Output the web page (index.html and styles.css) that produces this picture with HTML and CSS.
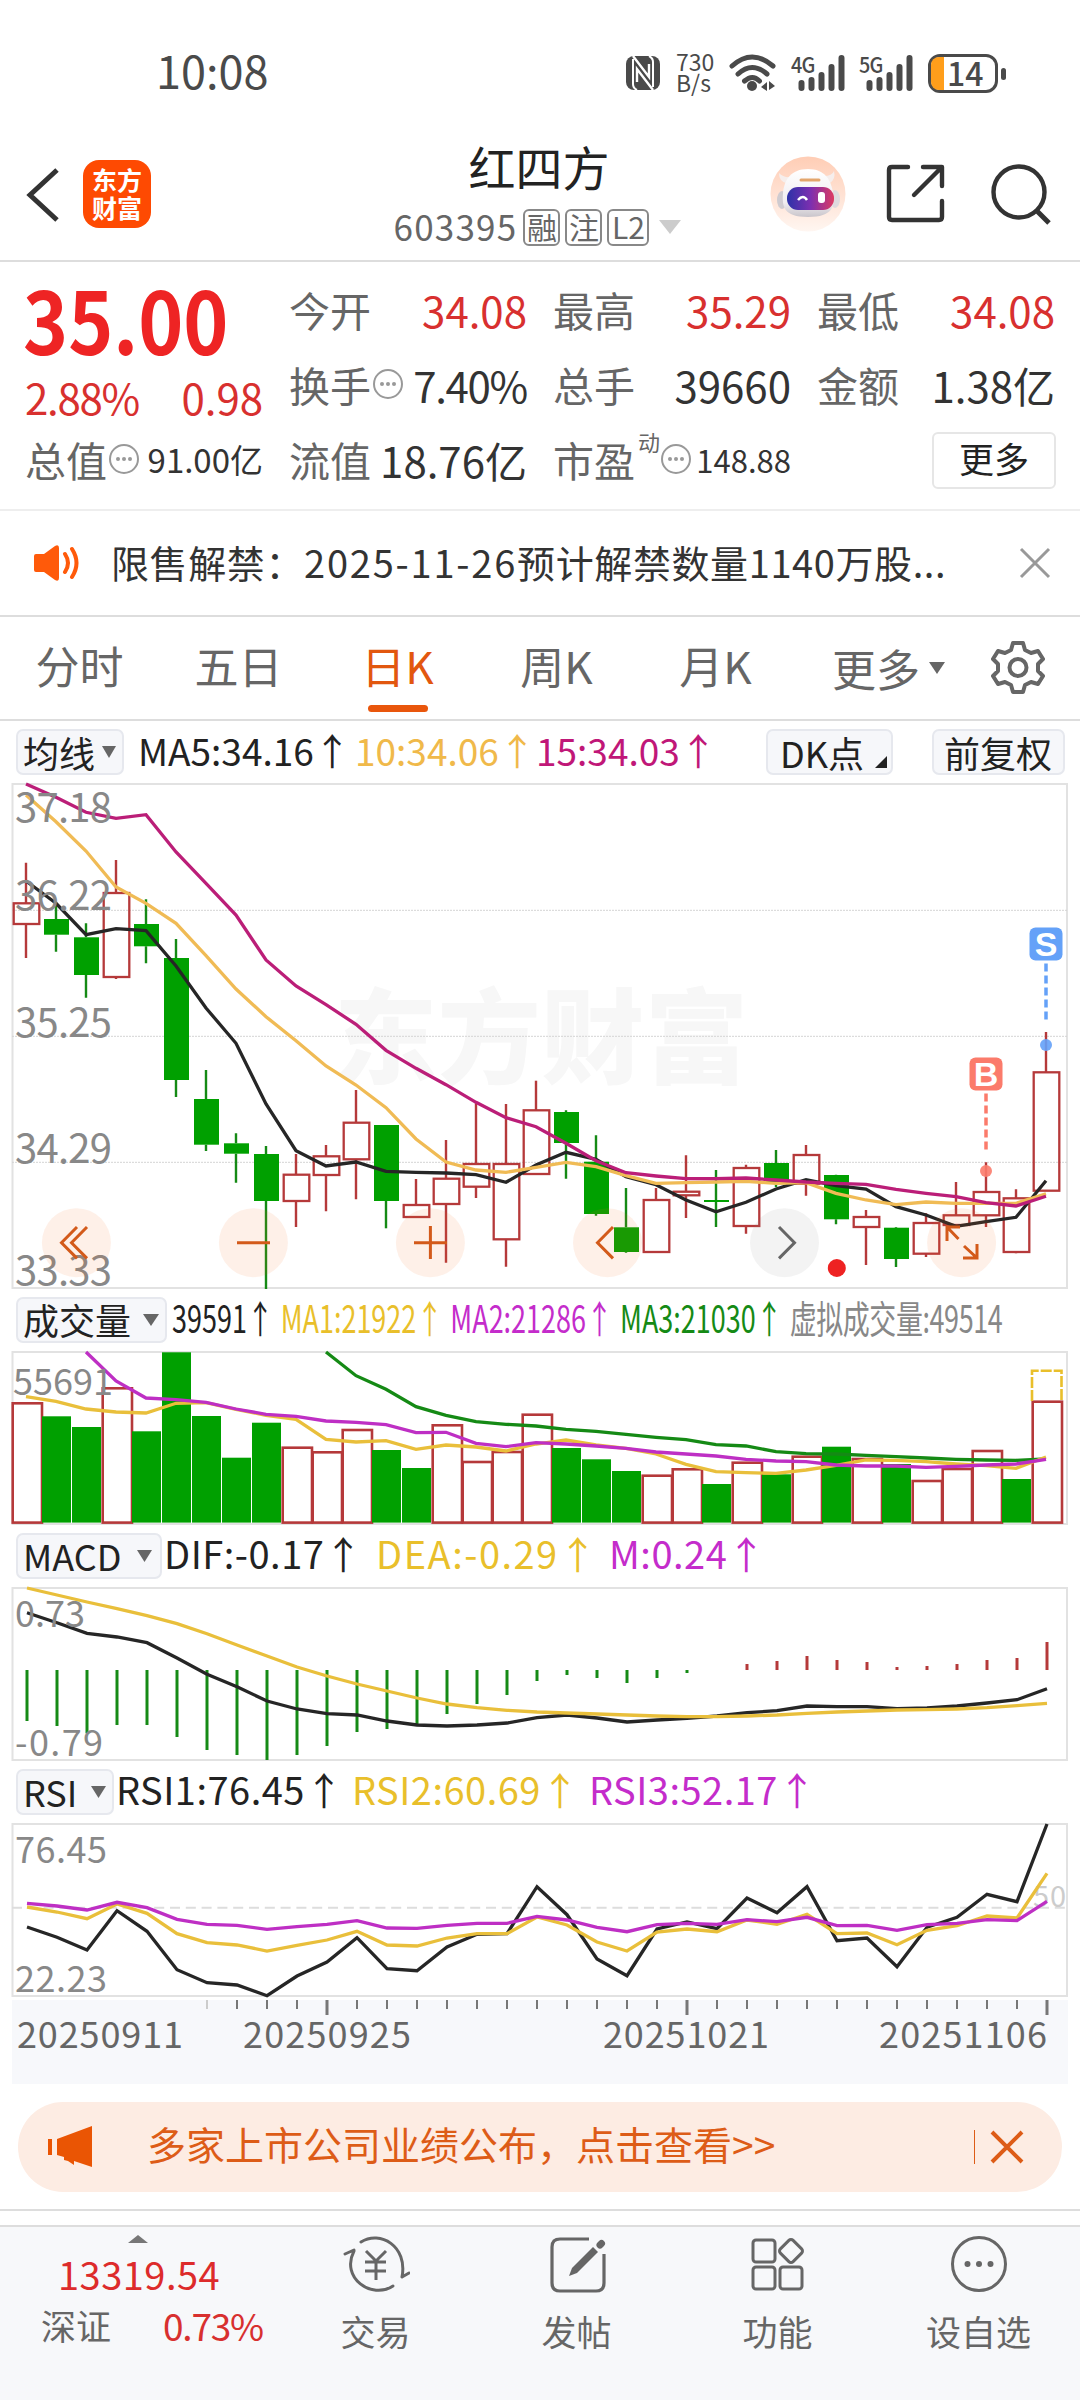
FILE: index.html
```html
<!DOCTYPE html>
<html lang="zh-CN">
<head>
	<meta charset="UTF-8">
	<title>红四方 603395</title>
	<link rel="stylesheet" href="styles.css">
</head>
<body>
	<!-- 状态栏 -->
	<div class="status">
		<span class="time">10:08</span>
		<svg class="nfc" width="34" height="34" viewBox="0 0 34 34"><rect width="34" height="34" rx="8" fill="#4a4a4a"/><path d="M7 0l16 21V8M27 34L11 13v13" fill="none" stroke="#fff" stroke-width="2.4"/><path d="M7 3v25q0 4 4 6M27 31V6q0-4-4-6" fill="none" stroke="#fff" stroke-width="2"/></svg>
		<span class="speed">730<br>B/s</span>
		<svg class="wifi" width="48" height="38" viewBox="0 0 48 38" fill="none" stroke="#4a4a4a" stroke-width="5" stroke-linecap="round"><path d="M3 12q20-18 41 0M9 20q14-13 29 0M15.500 27q8-7 15 0"/><circle cx="23" cy="32" r="5" fill="#4a4a4a" stroke="none"/><path d="M32 33l6-5v9zM46 32l-6-5v9z" fill="#4a4a4a" stroke="none"/></svg>
		<div class="signal">
			<span>4G</span>
			<svg width="54" height="38" viewBox="0 0 54 38" stroke="#4a4a4a" stroke-width="6" stroke-linecap="round"><path d="M10.500 29v5M20.500 26v8M30.500 21v13M40.500 13v21M50.500 4v30"/></svg>
		</div>
		<div class="signal">
			<span>5G</span>
			<svg width="54" height="38" viewBox="0 0 54 38" stroke="#4a4a4a" stroke-width="6" stroke-linecap="round"><path d="M10.500 29v5M20.500 26v8M30.500 21v13M40.500 13v21M50.500 4v30"/></svg>
		</div>
		<div class="battery"><i></i><span>14</span></div>
		<b class="nub"></b>
	</div>

	<!-- 标题栏 -->
	<div class="header">
		<svg class="back" width="34" height="56" viewBox="0 0 34 56"><path d="M31 3L4 28l27 25" fill="none" stroke="#333" stroke-width="5"/></svg>
		<div class="logo">东方<br>财富</div>
		<div class="title">
			<h1>红四方</h1>
			<p><span class="code">603395</span><em>融</em><em>注</em><em class="l2">L2</em><svg width="22" height="14"><path d="M0 0h22L11 14z" fill="#ccc"/></svg></p>
		</div>
		<svg class="robot" width="76" height="76" viewBox="0 0 76 76">
			<defs>
				<linearGradient id="peach" x1="0" y1="0" x2="0" y2="1"><stop offset="0" stop-color="#ffcdb5"/><stop offset="1" stop-color="#fff6f1"/></linearGradient>
				<linearGradient id="visor"><stop offset="0" stop-color="#2c32a8"/><stop offset=".5" stop-color="#7c2fb0"/><stop offset="1" stop-color="#dc3a62"/></linearGradient>
				<linearGradient id="helmet" x1="0" y1="0" x2="0" y2="1"><stop offset="0" stop-color="#fff"/><stop offset=".7" stop-color="#f0edf0"/><stop offset="1" stop-color="#c9c5cb"/></linearGradient>
			</defs>
			<circle cx="38" cy="38" r="37.500" fill="url(#peach)"/>
			<path d="M9 17q0 8 7 10l6-6q-9 1-13-4zM64 15q2 8-4 12l-6-7q8 0 10-5z" fill="#f6eeec"/>
			<ellipse cx="12" cy="44" rx="5" ry="9" fill="#cfcbd0"/><ellipse cx="65" cy="43" rx="5" ry="9" fill="#dedade"/>
			<path d="M38 13c17 0 23 11 25 24s0 24-25 24S12 50 13 37s8-24 25-24z" fill="url(#helmet)"/>
			<rect x="17" y="31" width="47" height="23" rx="11" fill="url(#visor)"/>
			<path d="M31 24h18" stroke="#e3a56c" stroke-width="3" stroke-linecap="round"/>
			<path d="M28 44q5-6 9 0" fill="none" stroke="#fff" stroke-width="2.500"/><rect x="48" y="36" width="7" height="11" rx="3" fill="#fff"/>
		</svg>
		<svg class="share" width="60" height="60" viewBox="0 0 60 60" fill="none" stroke="#333" stroke-width="4.400" stroke-linecap="round" stroke-linejoin="round"><path d="M23 4H7Q4 4 4 7v47q0 3 3 3h47q3 0 3-3V38M38 4h19v19M56 5L29 32"/></svg>
		<svg class="search" width="62" height="62" viewBox="0 0 62 62" fill="none" stroke="#333" stroke-width="4.400"><circle cx="29" cy="29" r="25.500"/><path d="M46 47l13 13" stroke-width="5"/></svg>
	</div>

	<!-- 行情 -->
	<div class="quote">
		<div class="col">
			<div class="price"><b>35.00</b></div>
			<div class="change"><span class="pct">2.88%</span><span>0.98</span></div>
			<div class="row"><label>总值</label><i class="dots"></i><span class="v s33">91.00亿</span></div>
		</div>
		<div class="col">
			<div class="row"><label>今开</label><span class="v up">34.08</span></div>
			<div class="row"><label>换手</label><i class="dots"></i><span class="v pct">7.40%</span></div>
			<div class="row"><label>流值</label><span class="v">18.76亿</span></div>
		</div>
		<div class="col">
			<div class="row"><label>最高</label><span class="v up">35.29</span></div>
			<div class="row"><label>总手</label><span class="v">39660</span></div>
			<div class="row"><label>市盈</label><sup>动</sup><i class="dots"></i><span class="v s31">148.88</span></div>
		</div>
		<div class="col">
			<div class="row"><label>最低</label><span class="v up">34.08</span></div>
			<div class="row"><label>金额</label><span class="v">1.38亿</span></div>
			<div class="row"><span class="more">更多</span></div>
		</div>
	</div>

	<!-- 公告 -->
	<div class="news">
		<svg width="46" height="38" viewBox="0 0 46 38"><path d="M2 10h8L21 2q4-2 4 2v30q0 4-4 2L10 28H2q-2 0-2-2V12q0-2 2-2z" fill="#ff5a0a"/><path d="M31 10q6 9 0 18M38 5q9 14 0 28" fill="none" stroke="#ff5a0a" stroke-width="4" stroke-linecap="round"/></svg>
		<span>限售解禁：<i>2025-11-26</i>预计解禁数量1140万股...</span>
		<svg class="close" width="32" height="32" viewBox="0 0 32 32"><path d="M2 2l28 28M30 2L2 30" stroke="#999" stroke-width="3"/></svg>
	</div>

	<!-- 周期切换 -->
	<div class="tabs">
		<span>分时</span><span>五日</span><span class="on">日K</span><span>周K</span><span>月K</span>
		<span class="drop">更多<svg width="16" height="12"><path d="M0 0h16L8 12z" fill="#666"/></svg></span>
		<svg class="gear" width="54" height="54" viewBox="0 0 54 54" fill="none" stroke="#666" stroke-width="4" stroke-linejoin="round"><path d="M22 3h10l2 7 6 3 7-2 5 8-5 5v7l5 5-5 8-7-2-6 3-2 7H22l-2-7-6-3-7 2-5-8 5-5v-7l-5-5 5-8 7 2 6-3z"/><circle cx="27" cy="27.500" r="8.500"/></svg>
	</div>

	<div class="legend main">
		<span class="pick">均线<svg width="14" height="12"><path d="M0 0h14L7 12z" fill="#666"/></svg></span>
		<span class="ma5">MA5:34.16<u>↑</u></span><span class="ma10">10:34.06<u>↑</u></span><span class="ma15">15:34.03<u>↑</u></span>
		<span class="pick dk">DK点<svg width="12" height="12"><path d="M12 0v12H0z" fill="#222"/></svg></span>
		<span class="pick fq">前复权</span>
	</div>
	<svg id="kline" class="chart" width="1080" height="504"></svg>

	<div class="legend vol">
		<span class="pick">成交量<svg width="16" height="12"><path d="M0 0h16L8 12z" fill="#666"/></svg></span>
		<div class="narrow"><span>39591<u>↑</u></span><span class="y">MA1:21922<u>↑</u></span><span class="m">MA2:21286<u>↑</u></span><span class="g">MA3:21030<u>↑</u></span><span class="v">虚拟成交量:49514</span></div>
	</div>
	<svg id="volume" class="chart" width="1080" height="172"></svg>

	<div class="legend macd">
		<span class="pick">MACD<svg width="15" height="12"><path d="M0 0h15L7.500 12z" fill="#666"/></svg></span>
		<span class="a">DIF:-0.17<u>↑</u></span><span class="y">DEA:-0.29<u>↑</u></span><span class="m">M:0.24<u>↑</u></span>
	</div>
	<svg id="macd" class="chart" width="1080" height="172"></svg>

	<div class="legend rsi">
		<span class="pick">RSI<svg width="15" height="12"><path d="M0 0h15L7.500 12z" fill="#666"/></svg></span>
		<span class="a">RSI1:76.45<u>↑</u></span><span class="y">RSI2:60.69<u>↑</u></span><span class="m">RSI3:52.17<u>↑</u></span>
	</div>
	<svg id="rsi" class="chart" width="1080" height="172"></svg>
	<svg id="axis" class="axis" width="1056" height="84" viewBox="12 0 1056 84"></svg>

	<!-- 活动条 -->
	<div class="banner">
		<svg width="46" height="42" viewBox="0 0 46 42" fill="#ea5504"><path d="M0 13h4v16H0zM9 13L44 0v41l-18-6v4l-6-4-4-1v-3l-7-2z"/></svg>
		<span>多家上市公司业绩公布，点击查看&gt;&gt;</span>
		<svg class="close" width="34" height="34" viewBox="0 0 34 34"><path d="M2 2l30 30M32 2L2 32" stroke="#dd5c17" stroke-width="4"/></svg>
	</div>

	<!-- 底部导航 -->
	<div class="nav">
		<div class="index">
			<svg width="20" height="8"><path d="M0 8L10 0l10 8z" fill="#777"/></svg>
			<strong>13319.54</strong>
			<p><span>深证</span><em>0.73%</em></p>
		</div>
		<div class="item"><svg width="68" height="60" viewBox="0 0 68 60" fill="none" stroke="#666" stroke-width="3"><path d="M19 8C38-4 66 12 60 43M51 52C30 66-2 44 12 17M3 20l9-4M60 43l7-4" stroke-linecap="round"/><path d="M24 17l10 10 10-10M23 28h21M23 37h21M34 27v19"/></svg>交易</div>
		<div class="item"><svg width="60" height="60" viewBox="0 0 60 60" fill="none" stroke="#666" stroke-width="3.200"><path d="M42 5H13q-8 0-8 8v36q0 8 8 8h36q8 0 8-8V20"/><path d="M53 11l1.500-1.500" stroke-width="7" stroke-linecap="round"/><path d="M46 13l5 5-21 21-8 3 3-8z" fill="#666" stroke="none"/></svg>发帖</div>
		<div class="item"><svg width="60" height="60" viewBox="0 0 60 60" fill="none" stroke="#666" stroke-width="3"><rect x="5" y="6" width="22" height="22" rx="3"/><rect x="5" y="33" width="22" height="22" rx="3"/><rect x="32" y="33" width="22" height="22" rx="3"/><rect x="34" y="8" width="18" height="18" rx="3" transform="rotate(45 43 17)"/></svg>功能</div>
		<div class="item"><svg width="60" height="60" viewBox="0 0 60 60" fill="none" stroke="#666" stroke-width="3"><circle cx="30" cy="30" r="26.500"/><g fill="#666" stroke="none"><circle cx="18.500" cy="30" r="3"/><circle cx="30" cy="30" r="3"/><circle cx="41.500" cy="30" r="3"/></g></svg>设自选</div>
	</div>
<script src="chart.js"></script>
</body>
</html>
```
FILE: styles.css
```css
*{margin:0;padding:0;box-sizing:border-box;}
body{width:1080px;height:2400px;background:#fff;color:#222;font-family:"Noto Sans CJK SC","Noto Sans",sans-serif;overflow:hidden;}
svg{display:block;flex:none;}
i,em{font-style:normal;}
span,label{white-space:nowrap;}

/* 状态栏 */
.status{height:130px;padding-top:54px;display:flex;align-items:flex-start;color:#4a4a4a;}
.status .time{width:468px;margin-left:156px;margin-top:-14px;font-size:45px;line-height:60px;}
.status .nfc{margin-left:2px;margin-top:2px;}
.status .speed{margin-left:16px;width:40px;font-size:23px;line-height:21px;margin-top:-3px;}
.status .wifi{margin-left:13px;}
.signal{position:relative;width:54px;margin-left:14px;}
.signal + .signal{margin-left:14px;}
.signal span{position:absolute;left:0;top:-3px;font-size:22px;line-height:24px;font-weight:500;letter-spacing:-1px;transform:scaleX(.9);transform-origin:left;}
.battery{width:70px;height:39px;margin-left:15px;border:3px solid #4a4a4a;border-radius:12px;display:flex;}
.battery i{width:13px;border-radius:8px 0 0 8px;background:#ff9e1b;}
.battery span{font-size:32px;line-height:30px;font-weight:500;margin-left:3px;}
.nub{width:5px;height:12px;margin:14px 0 0 3px;border-radius:3px;background:#4a4a4a;}

/* 标题栏 */
.header{height:132px;display:flex;border-bottom:2px solid #ddd;}
.back{margin:37px 0 0 26px;}
.logo{width:68px;height:68px;margin:30px 0 0 23px;padding-top:5px;border-radius:16px;background:#fe4a02;color:#fff;font-size:25px;line-height:28px;font-weight:700;text-align:center;}
.title{width:480px;margin-left:148px;text-align:center;}
.title h1{margin-top:5px;font-size:47px;line-height:62px;font-weight:400;}
.title p{display:flex;justify-content:center;align-items:center;height:38px;margin-top:11px;margin-left:-3px;}
.title .code{font-size:35px;line-height:34px;color:#666;letter-spacing:1.2px;margin:-3px 6px 0 0;}
.title em{width:37px;height:37px;margin-right:5px;border:2px solid #888;border-radius:6px;font-size:30px;line-height:31px;color:#666;}
.title em.l2{width:42px;margin-right:10px;}
.robot{margin:26px 0 0 -9px;}
.share{margin:33px 0 0 39px;}
.search{margin:33px 0 0 45px;}

/* 行情 */
.quote{height:249px;padding:10px 25px 0;display:grid;grid-template-columns:repeat(4,1fr);column-gap:26px;border-bottom:2px solid #eee;}
.row{height:75px;display:flex;align-items:center;font-size:41px;line-height:75px;}
.row label{color:#666;}
.row .v{margin-left:auto;color:#333;font-size:42px;}
.row .v.s33{font-size:33px;}
.row .v.s31{font-size:31px;}
.row .up,.change{color:#d8302f !important;}
.pct{letter-spacing:-1.3px;}
.row sup{align-self:flex-start;margin:-12px -1px 0 3px;font-size:22px;line-height:62px;color:#666;}
.dots{position:relative;width:30px;height:30px;margin:-2px 0 0 2px;border:2px solid #999;border-radius:50%;}
.dots:after{content:"";position:absolute;left:5px;top:11px;width:4px;height:4px;border-radius:2px;background:#999;box-shadow:6px 0 #999,12px 0 #999;}
.price{height:92px;color:#ee2424;font-size:86px;line-height:92px;}
.price b{display:inline-block;margin-left:-2px;transform:scaleX(.89);transform-origin:left;}
.change{height:50px;margin-top:8px;display:flex;justify-content:space-between;font-size:42px;line-height:50px;}
.more{width:124px;height:57px;margin:2px -1px 0 auto;border:2px solid #e6e6e6;border-radius:6px;text-align:center;font-size:35px;line-height:48px;}

/* 公告 */
.news{height:106px;display:flex;align-items:center;padding:0 29px 0 34px;border-bottom:2px solid #ddd;}
.news span{margin-left:31px;font-size:38px;color:#333;letter-spacing:.6px;margin-top:-4px;}
.news i{letter-spacing:1.8px;}
.news .close{margin-left:auto;}

/* 周期 */
.tabs{height:104px;display:flex;align-items:center;border-bottom:2px solid #ddd;font-size:44px;color:#666;}
.tabs span{width:159px;height:102px;line-height:97px;text-align:center;}
.tabs .on{position:relative;color:#e2570f;}
.tabs .on:after{content:"";position:absolute;left:50%;bottom:7px;width:60px;height:7px;margin-left:-30px;border-radius:4px;background:#e9560c;}
.tabs .drop{width:113px;margin-left:37px;display:flex;align-items:center;justify-content:space-between;}
.tabs .gear{margin-left:46px;margin-top:-2px;}

/* 指标说明行 */
.legend{height:64px;padding-left:16px;display:flex;align-items:center;font-size:37px;line-height:46px;}
.legend.main{height:63px;}
.legend u{text-decoration:none;}
.legend > span,.narrow{margin-top:-6px;}
.legend > .pick{margin-top:-1px;}
.pick{height:46px;padding:0 6px 0 5px;display:flex;align-items:center;justify-content:space-between;border:2px solid #e6e8ee;border-radius:7px;background:#f6f7fa;font-size:36px;line-height:37px;}
.main .pick{width:108px;}
.main .pick.dk{width:127px;margin-left:50px;padding:0 4px 0 12px;}
.main .dk svg{align-self:flex-end;margin-bottom:5px;}
.main .pick.fq{width:133px;margin-left:39px;padding:0 10px 0 10px;}
.ma5{width:217px;margin-left:14px;}
.ma10{width:181px;color:#f0b94a;}
.ma15{width:180px;color:#c01778;}
.y{color:#e9bf2b;}
.m{color:#c42ccb;}
.g{color:#158a15;}
.vol .pick{width:151px;}
.narrow{display:flex;width:0;margin-left:5px;font-size:38px;transform:scaleX(.71);transform-origin:left;}
.narrow span{flex:none;width:239px;}
.narrow span:first-child{width:153px;}
.narrow .v{color:#888;letter-spacing:-.6px;}
.macd,.rsi{font-size:38px;letter-spacing:.5px;}
.macd .pick,.rsi .pick{letter-spacing:0;}
.macd .pick{width:146px;padding-right:8px;}
.macd .a{width:212px;margin-left:2px;}
.macd .y{width:233px;letter-spacing:1.5px;}
.rsi .pick{width:98px;}
.rsi .a{width:236px;margin-left:2px;}
.rsi .y{width:237px;}
.chart{overflow:visible;}
.axis{margin:4px 0 0 12px;background:#f7f8fb;}

/* 活动条 */
.banner{width:1044px;height:90px;margin:18px 18px 33px;padding:0 38px 0 30px;display:flex;align-items:center;border-radius:45px;background:#fdece3;color:#dd5c17;}
.banner span{margin-left:53px;font-size:39px;line-height:80px;margin-top:-8px;}
.banner .close{width:50px;padding-left:15px;border-left:1px solid #dd5c17;margin-left:auto;}

/* 底部导航 */
.nav{height:176px;display:flex;background:#f7f8fa;border-top:2px solid #ddd;box-shadow:0 -14px #fff,0 -16px #ddd;color:#666;}
.index{width:275px;padding:8px 12px 0 41px;}
.index svg{margin-left:87px;}
.index strong{display:block;margin-left:17px;font-size:38px;line-height:62px;font-weight:400;letter-spacing:.5px;color:#dd2b2b;}
.index p{display:flex;justify-content:space-between;font-size:35px;line-height:40px;}
.index em{font-size:37px;letter-spacing:-1.2px;color:#d8302f;}
.item{width:201px;display:flex;flex-direction:column;align-items:center;padding-top:7px;font-size:35px;line-height:73px;}
```
FILE: chart.js
```javascript
var NS = 'http://www.w3.org/2000/svg';
var RED = '#b5393a', GREEN = '#00a000', INK = '#262626';

function add(svg, tag, attrs, text) {
	var el = document.createElementNS(NS, tag);
	for (var k in attrs) el.setAttribute(k, attrs[k]);
	if (text) el.textContent = text;
	svg.appendChild(el);
	return el;
}
// 折线，from 为第一根K线序号，x0 为第一根中心
function line(svg, ys, color, x0, from) {
	var pts = ys.map(function(y, i) { return (x0 + 30 * (i + (from || 0))) + ',' + y; });
	add(svg, 'polyline', {points: pts.join(' '), fill: 'none', stroke: color, 'stroke-width': 3.3});
}
function label(svg, x, y, w, text, size, color) {
	add(svg, 'text', {x: x, y: y, 'font-size': size, fill: color || '#888', textLength: w}, text);
}
function frame(svg, h) {
	add(svg, 'rect', {x: 12.5, y: 0, width: 1054.5, height: h, fill: 'none', stroke: '#e2e2e2', 'stroke-width': 2});
}

// 主图
var k = document.getElementById('kline');
add(k, 'text', {x: 334, y: 292, 'font-size': 103, 'font-weight': 900, fill: '#f7f7f7', textLength: 414}, '东方财富');
frame(k, 504);
[126.3, 252.3, 378.3].forEach(function(y) {
	add(k, 'path', {d: 'M12 ' + y + 'H1067', stroke: '#d4d4d4', 'stroke-width': 1, 'stroke-dasharray': '2 1'});
});
// [涨=1, 最高, 实体上, 实体下, 最低]
var candles = [
	[1,78.7,119.3,140,174],[0,122,135,150.7,167.7],[0,139.3,153.3,191,213.7],[1,76,109,193,195],
	[0,115.3,140,162.3,179.3],[0,155,174,296,313],[0,286,315,360.7,367],[0,349.3,359.3,369.7,398.7],
	[0,362,370,417,505],[1,370,390.7,417,443],[1,361,372.3,391,427.3],[1,306,338.7,375.3,415.3],
	[0,341,341,417,444.3],[1,395,421,433,433],[1,356,394.7,420,478.7],[1,319.3,380,402.7,414],
	[1,320,380,455.3,482.7],[1,296.7,326.3,390,390],[0,326.3,328,359,394.7],[0,351.3,377.7,430,431.7],
	[0,404,443.3,468,468.7],[1,404,416,468,468],[1,371.3,407.7,411.3,434],[0,386,416,418,443],
	[1,380.7,384,442,449.7],[0,366,379,399,403],[1,361,371,399.7,411.7],[0,390.7,391,435.3,440.3],
	[1,426,433,443,481],[0,443,443.7,475,483],[1,429.3,439,469.7,473],[1,398,431.3,441,442.7],
	[1,378.3,408,431.3,443],[1,405.3,414.3,468,469.3],[1,248,288.3,406.7,406.7]
];
candles.forEach(function(c, i) {
	var x = 26 + 30 * i, col = c[0] ? RED : '#158a15';
	add(k, 'path', {d: 'M' + x + ' ' + c[1] + 'V' + c[2] + 'M' + x + ' ' + c[3] + 'V' + c[4], stroke: col, 'stroke-width': 2.4});
	if (c[0]) add(k, 'rect', {x: x - 12.3, y: c[2], width: 25.6, height: c[3] - c[2], fill: 'none', stroke: RED, 'stroke-width': 2.3});
	else add(k, 'rect', {x: x - 12, y: c[2], width: 25, height: c[3] - c[2], fill: GREEN});
});
line(k, [97,119.3,150.7,144.7,146.7,182,224,259.3,320,366.7,382,378,387.3,388.3,389,390.7,398.3,381,368.3,375.3,392.7,400.7,416,427.7,418.3,405,395.7,401.7,405,422.7,431,442.3,437.7,433.3,396.7], INK, 26);
line(k, [11,37.7,67,103,119.3,139.3,171.7,205,232.7,256.7,282,301,323.7,355,378,386,388.3,383.3,378.3,382.7,391.7,399.3,398.7,398,397.3,399.3,398.7,409.3,416,420.7,418,419.3,419.3,419.3,409.7], '#f0bb55', 26);
line(k, [0,13.3,28.3,34.3,30.7,68,99.3,131,176,202,220.7,240.3,266.3,284.3,300.7,318.3,333.7,342.7,359.3,376.7,388.7,392,394.7,394.7,394,396,398,399.3,400.3,405.3,409.3,412.7,418.7,422,412.3], '#bb1e78', 26);
label(k, 15, 38, 97, '37.18', 40);
label(k, 15, 126, 97, '36.22', 40);
label(k, 15, 253, 97, '35.25', 40);
label(k, 15, 379, 97, '34.29', 40);
label(k, 15, 501, 97, '33.33', 40);

// 买卖点
function mark(x, top, color, text, dot) {
	add(k, 'rect', {x: x - 16.5, y: top, width: 33, height: 33, rx: 6, fill: color});
	add(k, 'text', {x: x, y: top + 28.5, 'font-size': 34, 'font-weight': 700, 'font-family': 'Liberation Sans, sans-serif', 'text-anchor': 'middle', fill: '#fff'}, text);
	add(k, 'path', {d: 'M' + x + ' ' + (top + 36) + 'v56', stroke: color, 'stroke-width': 3.5, 'stroke-dasharray': '8 4'});
	add(k, 'circle', {cx: x, cy: dot, r: 6, fill: color, 'fill-opacity': .9});
}
mark(986, 273.5, '#fb7b6b', 'B', 387);
mark(1046, 143.5, '#64a1f8', 'S', 261);

// 操作按钮
[[76.4, 'M77 443l-15.500 15.700L77 474.400M87 443l-15.500 15.700L87 474.400'], [253.4, 'M237 458.700h33'], [430.4, 'M414 458.700h33M430.400 442v33'], [607.5, 'M613 443l-15.500 15.700L613 474.400'], [784.5, 'M779 443l15.500 15.700L779 474.400'], [961.6, 'M958.500 455L947 443M947 457V443h13M964 462l13 12M977 460v14h-14']].forEach(function(b, i) {
	add(k, 'circle', {cx: b[0], cy: 458.7, r: 34.5, fill: i == 4 ? '#888' : '#f76a1c', 'fill-opacity': .1});
	add(k, 'path', {d: b[1], fill: 'none', stroke: i == 4 ? '#666' : '#d35a1a', 'stroke-width': 3});
});
add(k, 'circle', {cx: 836.8, cy: 484, r: 9, fill: '#ee2222'});

// 成交量
var v = document.getElementById('volume');
frame(v, 172);
[51.3,64.3,75,36.3,79.3,0.3,64,105.7,70.7,95.7,100.3,78,98,116,73.3,110,100,62.7,96,107.3,119,123.7,117.3,132,110.7,122.3,104.7,94.7,107,112,129,117,99,127,49.7].forEach(function(y, i) {
	var x = 12 + 30 * i;
	// 13、33 收盘低于昨收，量柱为绿
	if (candles[i][0] && i != 13 && i != 33) add(v, 'rect', {x: x + .7, y: y, width: 29.3, height: 170.6 - y, fill: 'none', stroke: RED, 'stroke-width': 2.6});
	else add(v, 'rect', {x: x, y: y, width: 29, height: 170.6 - y, fill: GREEN});
});
add(v, 'path', {d: 'M1032 49V18.700h29.500V49', fill: 'none', stroke: '#e9bf2b', 'stroke-width': 2.6, 'stroke-dasharray': '11 2'});
line(v, [0,23.7,37.3,54.7,63.3,69.7,72.3,74,77.3,79.3,82.3,85.3,87.7,92.7,94,99.7,101.7,102,103.3,104.7,106,107.3,108,108.3,107], '#158a15', 26, 10);
line(v, [44.7,49.3,57,60,61,51.3,50.7,57.3,63.3,67.3,87.3,90,88.7,97.3,93,95,99,92,88,93,96.3,102,112.3,119.7,120.7,121.3,118,113.3,108,108.3,109.7,112,113.7,116.3,105], '#e9bf3b', 26);
line(v, [0,29,46,47.7,50.3,57,62.3,64.3,69,70.3,72.7,80.7,80.3,91.3,94.7,90.7,92,94,96.3,100,102,104,107.3,109,109.7,113,114,114,115.3,114.3,113,112,107.3], '#be2fc4', 26, 2);
label(v, 13, 42.5, 100, '55691', 36);

// MACD
var m = document.getElementById('macd');
frame(m, 172);
[133,138,145.3,137,137,149,162,167,172,167,158,144,141,137,126,116,107,93,87,90,95,90,85,82,76,73,68,72,74,79,78,76,72,70,54].forEach(function(y, i) {
	add(m, 'path', {d: 'M' + (27 + 30 * i) + ' 82V' + y, stroke: y > 82 ? '#158a15' : RED, 'stroke-width': 3});
});
line(m, [24.7,34.7,45.3,49,54.7,70,86.3,98.7,113,121,125.7,127,133,137,138,137,135,129.7,127,130,134,132,130.3,128,124.7,122.7,118,118.7,118.7,120.7,120,118,115,111.7,100.7], INK, 27);
line(m, [0,7,14,20.7,27.7,35.7,45.7,57,68,79,88,96,103,110,116,119.7,122.3,124,125,126,127,128,128.7,128.7,128,127,125.3,124,123,122,121.7,121,119.7,117.7,115.3], '#e9bf3b', 27);
label(m, 15, 38.5, 70, '0.73', 36);
label(m, 15, 167.5, 88, '-0.79', 36);

// RSI
var r = document.getElementById('rsi');
frame(r, 172);
add(r, 'path', {d: 'M12 83.700H1067', stroke: '#ddd', 'stroke-width': 2, 'stroke-dasharray': '10 5.800'});
label(r, 1033, 83, 33, '50', 29, '#ccc');
line(r, [103,113.3,126,86.7,107.3,145.7,158.7,161,171.7,152,138,113.7,144.7,146.7,123,110.3,109.7,62.7,90.7,135,151.7,105,98,104.7,74,88.7,62.7,116.7,114,142.7,103.3,93.3,70.3,77.7,0], INK, 27);
line(r, [83,88,94.7,80,89.3,109.7,118.7,121,127,121.3,116,107.3,121,122,114,109.7,109.7,93,101,118,127,108,105,107.7,96,100.3,90.3,109.7,109,120.7,106.3,101.7,92,94,49.3], '#e9bf3b', 27);
line(r, [79.3,82,86,78.3,83.7,95.3,100.3,101.3,105.3,102.7,100.3,96.7,104,104.3,101.3,99.3,99.3,92.3,96,103.3,107.7,100.7,99.3,100.3,95.7,97.7,93.3,101.7,101.3,106.3,100.7,99.3,95.7,96.7,77.3], '#be2fc4', 27);
label(r, 15, 39, 92, '76.45', 36);
label(r, 15, 168, 92, '22.23', 36);

// 时间轴
var a = document.getElementById('axis');
for (var i = 6; i < 35; i++) {
	var big = i == 10 || i == 22 || i == 34;
	add(a, 'path', {d: 'M' + (27 + 30 * i) + ' 0v' + (big ? 15 : 9), stroke: i == 6 ? '#ccc' : '#777', 'stroke-width': big ? 3 : 2});
}
label(a, 17, 48, 166, '20250911', 36, '#666');
label(a, 243, 48, 168, '20250925', 36, '#666');
label(a, 603, 48, 166, '20251021', 36, '#666');
label(a, 879, 48, 168, '20251106', 36, '#666');
```
